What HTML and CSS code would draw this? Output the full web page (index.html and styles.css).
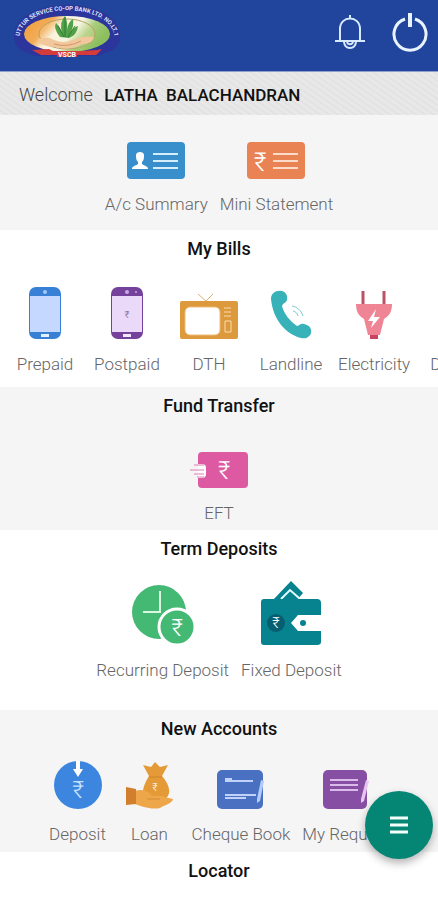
FILE: index.html
```html
<!DOCTYPE html>
<html lang="en">
<head>
    <meta charset="UTF-8">
    <meta name="viewport" content="width=device-width, initial-scale=1.0">
    <title>Mobile Banking</title>
    <link rel="stylesheet" href="styles.css">
</head>
<body>
    <header class="topbar">
        <svg class="logo" width="112" height="58" viewBox="0 0 112 58">
            <defs>
                <linearGradient id="flag" x1="0" y1="0" x2="1" y2="0.35">
                    <stop offset="0" stop-color="#ee9a35"/>
                    <stop offset="0.32" stop-color="#f3ad58"/>
                    <stop offset="0.46" stop-color="#fbf3e2"/>
                    <stop offset="0.64" stop-color="#f5f6e6"/>
                    <stop offset="0.8" stop-color="#a9cd7c"/>
                    <stop offset="1" stop-color="#8dbf5e"/>
                </linearGradient>
                <path id="ring" d="M9 40C0 -5 112 -5 103 40"/>
            </defs>
            <path d="M3 34C1 -10 111 -10 109 34C109 44 98 49 86 52H26C14 49 3 44 3 34Z" fill="#2b359b"/>
            <ellipse cx="56" cy="30" rx="43" ry="18" fill="url(#flag)"/>
            <ellipse cx="56" cy="30" rx="28" ry="15" fill="#f9f0c8" fill-opacity=".2" stroke="#b9a266" stroke-width="1"/>
            <path d="M49 33Q42 24 45 19Q50 24 51 29Q48 18 54 12Q57 18 56 26Q57 18 62 15Q63 22 60 28Q63 23 67 22Q66 31 58 34Z" fill="#52a048"/>
            <path d="M54 13V33M47 22L53 33M64 22L57 33" stroke="#2f7c38" stroke-width="1" fill="none"/>
            <path d="M28 35Q37 32 43 36Q53 40 61 36Q72 31 83 33Q82 40 71 40Q58 47 44 43Q35 43 28 39Z" fill="#f2c79c"/>
            <path d="M43 40Q57 44 70 37" stroke="#cf9668" fill="none"/>
            <path d="M21 46L38 45L42 47H70L86 46L91 45L85 51L66 51V53H46V51H30Z" fill="#d43c3b"/>
            <text class="logo-ring"><textPath href="#ring" startOffset="50%">UTTUR SERVICE CO-OP BANK LTD. NO.LT.1</textPath></text>
            <text class="logo-name" x="56" y="53">VSCB</text>
        </svg>
        <div class="actions">
            <button class="icon-button" aria-label="Notifications">
                <svg width="32" height="36" viewBox="0 0 32 36" fill="none" stroke="#d8eaff" stroke-width="2">
                    <path d="M16 1V5M6 27V15C6 1 26 1 26 15V27M1 27H31M10 28C11 36 21 36 22 28M13 28C14 31 18 31 19 28"/>
                </svg>
            </button>
            <button class="icon-button" aria-label="Log out">
                <svg width="36" height="40" viewBox="0 0 36 40" fill="none" stroke="#e8f3ff">
                    <path d="M13 7A16 16 0 1 0 23 7" stroke-width="3"/>
                    <path d="M18 1V15" stroke-width="4"/>
                </svg>
            </button>
        </div>
    </header>

    <div class="welcome">Welcome <span class="customer">LATHA&nbsp; BALACHANDRAN</span></div>

    <main>
        <section class="group shaded accounts">
            <nav class="tiles">
                <a class="tile" href="#">
                    <svg width="58" height="37" viewBox="0 0 58 37">
                        <rect width="58" height="37" rx="4" fill="#398fcb"/>
                        <path d="M5 27C5 24 8 24 11 22V20C9 18 9 16 9 13C9 9 17 9 17 13C17 16 17 18 15 20V22C18 24 21 24 21 27Z" fill="#fff"/>
                        <path d="M26 12H51M26 19H51M26 26H51" stroke="#d6edfa" stroke-width="2"/>
                    </svg>
                    A/c Summary
                </a>
                <a class="tile" href="#">
                    <svg width="58" height="37" viewBox="0 0 58 37">
                        <rect width="58" height="37" rx="4" fill="#e98354"/>
                        <text class="rupee" x="13" y="29" font-size="26">₹</text>
                        <path d="M26 12H51M26 19H51M26 26H51" stroke="#fbdccb" stroke-width="2"/>
                    </svg>
                    Mini Statement
                </a>
            </nav>
        </section>

        <section class="group bills">
            <h2>My Bills</h2>
            <nav class="tiles">
                <a class="tile" href="#">
                    <svg width="32" height="52" viewBox="0 0 32 52">
                        <rect width="32" height="52" rx="7" fill="#3880d6"/>
                        <path d="M1 9H31V45H1Z" fill="#c5d8ff"/>
                        <circle cx="16" cy="5" r="2" fill="#9dcaf7"/>
                        <rect x="12" y="47" width="8" height="3" fill="#e3f0ff"/>
                    </svg>
                    Prepaid
                </a>
                <a class="tile" href="#">
                    <svg width="32" height="52" viewBox="0 0 32 52">
                        <rect width="32" height="52" rx="7" fill="#74419b"/>
                        <path d="M1 9H31V45H1Z" fill="#ead9f8"/>
                        <circle cx="16" cy="5" r="2" fill="#caa9e4"/>
                        <circle cx="25" cy="5" r="1" fill="#caa9e4"/>
                        <rect x="12" y="47" width="8" height="3" fill="#f3e7fc"/>
                        <text class="rupee dark" x="16" y="31" font-size="10">₹</text>
                    </svg>
                    Postpaid
                </a>
                <a class="tile" href="#">
                    <svg width="58" height="46" viewBox="0 0 58 46">
                        <path d="M18 1L26 8L33 1" fill="none" stroke="#ddb277" stroke-width="1"/>
                        <rect y="8" width="58" height="38" rx="2" fill="#dd9a3c"/>
                        <rect x="5" y="14" width="35" height="28" rx="5" fill="#fff" stroke="#eebc78" stroke-width="1"/>
                        <path d="M44 15H51M44 19H51M44 23H51M45 28H51V39H45Z" fill="none" stroke="#f7ddb3" stroke-width="1"/>
                    </svg>
                    DTH
                </a>
                <a class="tile" href="#">
                    <svg width="42" height="49" viewBox="0 0 42 49">
                        <path d="M1 9C1 3 6 0 12 1C16 2 18 6 17 10C16 13 13 13 12 16C14 24 20 31 27 36C30 36 30 33 34 34C39 35 42 38 41 43C40 47 36 49 31 48C16 44 3 30 1 9Z" fill="#37b2b9"/>
                        <path d="M22 16C27 17 31 20 33 26M23 21C26 22 27 23 28 26" fill="none" stroke="#7cc9ce" stroke-width="1"/>
                    </svg>
                    Landline
                </a>
                <a class="tile" href="#">
                    <svg width="36" height="48" viewBox="0 0 36 48">
                        <path d="M7 0V13M28 0V13" stroke="#bb5267" stroke-width="3"/>
                        <path d="M14 41H22V48H14Z" fill="#c84461"/>
                        <path d="M0 13H36C36 21 33 25 28 28L24 44H12L8 28C3 25 0 21 0 13Z" fill="#ef8495"/>
                        <path d="M20 18L12 30H17L15 37L24 26H18Z" fill="#fff"/>
                    </svg>
                    Electricity
                </a>
                <a class="tile clipped" href="#">D</a>
            </nav>
        </section>

        <section class="group shaded transfer">
            <h2>Fund Transfer</h2>
            <nav class="tiles">
                <a class="tile" href="#">
                    <svg width="58" height="36" viewBox="0 0 58 36">
                        <rect x="8" width="50" height="36" rx="4" fill="#dd5aa2"/>
                        <path d="M8 12H12Q16 12 16 16V22Q16 26 12 26H8Z" fill="#fff"/>
                        <path d="M4 13H14M0 18H14M4 22H14M7 25H14" stroke="#e27db2" stroke-width="1"/>
                        <text class="rupee" x="34" y="27" font-size="25">₹</text>
                    </svg>
                    EFT
                </a>
            </nav>
        </section>

        <section class="group deposits">
            <h2>Term Deposits</h2>
            <nav class="tiles">
                <a class="tile" href="#">
                    <svg width="62" height="61" viewBox="0 0 62 61">
                        <circle cx="27" cy="28" r="27" fill="#43b974"/>
                        <path d="M28 7V28H11" fill="none" stroke="#d9f6de" stroke-width="2"/>
                        <circle cx="45" cy="43" r="18" fill="#43b974" stroke="#fff" stroke-width="3"/>
                        <text class="rupee" x="45" y="52" font-size="24">₹</text>
                    </svg>
                    Recurring Deposit
                </a>
                <a class="tile" href="#">
                    <svg width="60" height="64" viewBox="0 0 60 64">
                        <path d="M12 19L30 0L42 12L36 19Z" fill="#07828f"/>
                        <path d="M20 18L29 9L38 17" fill="none" stroke="#e4fbff" stroke-width="2"/>
                        <path d="M3 18H56Q60 18 60 22V34H37L30 42L37 50H60V61Q60 64 56 64H3Q0 64 0 61V21Q0 18 3 18Z" fill="#07828f"/>
                        <circle cx="15" cy="42" r="9" fill="#075e70"/>
                        <circle cx="42" cy="42" r="3" fill="#07828f"/>
                        <text class="rupee" x="15" y="47" font-size="15">₹</text>
                    </svg>
                    Fixed Deposit
                </a>
            </nav>
        </section>

        <section class="group shaded new-accounts">
            <h2>New Accounts</h2>
            <nav class="tiles">
                <a class="tile" href="#">
                    <svg width="48" height="48" viewBox="0 0 48 48">
                        <circle cx="24" cy="24" r="24" fill="#3d86e0"/>
                        <path d="M22 0H26V8H29L24 16L19 8H22Z" fill="#fff"/>
                        <text class="rupee soft" x="24" y="37" font-size="24">₹</text>
                    </svg>
                    Deposit
                </a>
                <a class="tile" href="#">
                    <svg width="48" height="47" viewBox="0 0 48 47">
                        <path d="M17 3L25 5L29 0L34 5L42 3L36 14C42 21 45 28 42 34L36 40H18C15 33 17 23 23 14Z" fill="#e59a38"/>
                        <path d="M23 15H36" stroke="#cb842b" stroke-width="1"/>
                        <path d="M9 29C17 26 23 30 26 34H34C38 34 40 36 47 37C46 42 38 43 34 46C25 48 15 44 9 42Z" fill="#eda64a"/>
                        <path d="M21 37H34" stroke="#d38d35" stroke-width="1"/>
                        <path d="M0 25L10 27V42L0 43Z" fill="#d17f2c"/>
                        <text class="rupee" x="29" y="29" font-size="11">₹</text>
                    </svg>
                    Loan
                </a>
                <a class="tile" href="#">
                    <svg width="48" height="39" viewBox="0 0 48 39">
                        <rect width="46" height="39" rx="5" fill="#4a70c1"/>
                        <path d="M8 11H36M8 9H15M8 25H39M8 28H29" stroke="#c1d2fa" stroke-width="2"/>
                        <path d="M44 10L47 11L43 31L40 33V29Z" fill="#b4ccfb"/>
                    </svg>
                    Cheque Book
                </a>
                <a class="tile" href="#">
                    <svg width="46" height="39" viewBox="0 0 46 39">
                        <rect width="44" height="39" rx="5" fill="#874fa3"/>
                        <path d="M7 10H35M7 15H35M7 20H35" stroke="#dabbea" stroke-width="2"/>
                        <path d="M43 10L46 11L41 31L38 33V29Z" fill="#e6c5ef"/>
                    </svg>
                    My Request
                </a>
            </nav>
        </section>

        <section class="group locator">
            <h2>Locator</h2>
        </section>
    </main>

    <button class="fab" aria-label="Menu">
        <svg width="18" height="18" viewBox="0 0 18 18">
            <path d="M0 2H18M0 9H18M0 16H18" stroke="#f4fffc" stroke-width="3"/>
        </svg>
    </button>
</body>
</html>
```
FILE: styles.css
```css
* {
    box-sizing: border-box;
}
body {
    margin: 0;
    font-family: Roboto, sans-serif;
    font-size: 18px;
    line-height: 20px;
    background-color: #fff;
    overflow-x: hidden;
}
.topbar {
    display: flex;
    justify-content: space-between;
    align-items: flex-start;
    height: 72px;
    padding: 4px 10px 0 11px;
    background-color: #21459c;
    border-bottom: 1px solid #8fa0cd;
}
.actions {
    display: flex;
    align-items: center;
    gap: 26px;
    padding-top: 8px;
}
.icon-button {
    display: flex;
    padding: 0;
    border: none;
    background: none;
    cursor: pointer;
}
.logo-ring {
    font-size: 6px;
    font-weight: bold;
    fill: #dde3fa;
    text-anchor: middle;
}
.logo-name {
    font-size: 7px;
    font-weight: bold;
    fill: #fff;
    text-anchor: middle;
}
.welcome {
    padding: 13px 19px 10px;
    font-weight: 300;
    color: #444;
    background: repeating-linear-gradient(35deg, #e8e8e8 0 3px, #e3e3e3 3px 5px);
}
.customer {
    margin-left: 7px;
    font-size: 17px;
    font-weight: 500;
    color: #111;
}
.group {
    overflow: hidden;
}
.shaded {
    background-color: #f5f5f5;
}
h2 {
    margin: 0;
    padding-top: 9px;
    font-size: 18px;
    font-weight: 500;
    line-height: 20px;
    text-align: center;
    color: #111;
}
.tiles {
    display: flex;
    justify-content: center;
    align-items: flex-end;
}
.tile {
    display: flex;
    flex-direction: column;
    flex-shrink: 0;
    align-items: center;
    gap: 15px;
    padding: 0 6px;
    font-size: 17px;
    font-weight: 300;
    color: #666;
    text-decoration: none;
    white-space: nowrap;
}
.accounts {
    padding: 27px 0 16px;
}
.bills {
    padding-bottom: 13px;
}
.bills .tiles {
    justify-content: flex-start;
    padding: 28px 0 0 4px;
}
.bills .tile {
    min-width: 82px;
}
.bills .clipped {
    align-items: flex-start;
    padding-left: 14px;
}
.transfer {
    padding-bottom: 7px;
}
.transfer .tiles {
    padding-top: 36px;
}
.deposits {
    padding-bottom: 30px;
}
.deposits .tiles {
    padding-top: 22px;
}
.new-accounts {
    padding-bottom: 8px;
}
.new-accounts .tiles {
    padding-top: 22px;
}
.new-accounts .tile {
    min-width: 72px;
}
.locator {
    padding-bottom: 19px;
}
.rupee {
    fill: #fff;
    font-weight: 300;
    text-anchor: middle;
}
.rupee.dark {
    fill: #785d91;
}
.rupee.soft {
    fill: #c5e3ff;
}
.fab {
    position: fixed;
    right: 5px;
    bottom: 41px;
    display: flex;
    justify-content: center;
    align-items: center;
    width: 68px;
    height: 68px;
    border: none;
    border-radius: 50%;
    background-color: #058674;
    box-shadow: 0 4px 8px rgba(0,0,0,0.3);
    cursor: pointer;
}
```
